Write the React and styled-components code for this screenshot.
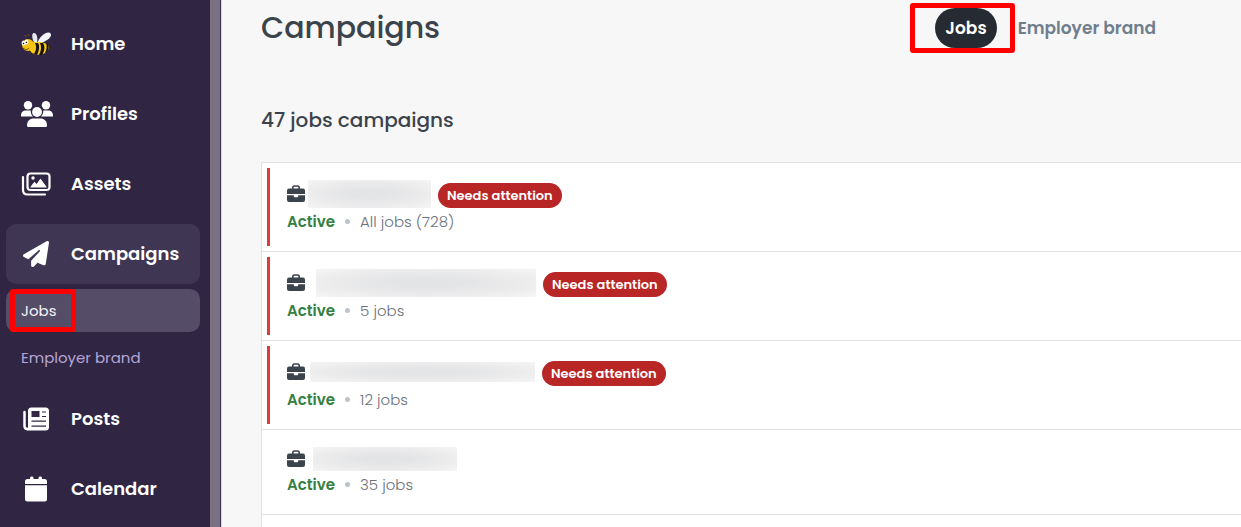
import React from "react";
import styled, {createGlobalStyle} from 'styled-components';
import {FaPaperPlane} from "react-icons/fa6";

const GlobalStyle = createGlobalStyle`
  * {
    box-sizing: border-box;
  }
  body {
    margin: 0;
    background-color: #f7f7f7;
    color: #3b434c;
    font-family: Poppins, Inter, sans-serif;
    overflow: hidden;
  }
  a {
    color: inherit;
    text-decoration: none;
  }
`;

const Layout = styled.div`
  display: flex;
  height: 100vh;
`;

const Sidebar = styled.nav`
  display: flex;
  flex-direction: column;
  flex: none;
  width: 222px;
  padding: 14px 10px 0 6px;
  overflow: hidden;
  background-color: #302643;
  border-right: 1px solid #dcdade;
  box-shadow: inset -1px 0 #3c3350, inset -11px 0 #7a7183;
`;

const NavItem = styled.a`
  display: flex;
  align-items: center;
  flex: none;
  width: 194px;
  height: 60px;
  margin-bottom: ${({$open}) => $open ? '5px' : '10px'};
  padding-left: 15px;
  border-radius: 10px;
  background-color: ${({$open}) => $open ? '#3f3653' : 'transparent'};
  color: #fff;
  font-size: 18px;
  line-height: 26px;
  font-weight: 600;
`;

const NavIcon = styled.span`
  display: flex;
  flex: none;
  justify-content: center;
  width: 30px;
  margin-right: 20px;
  font-size: 26px;
  svg {
    flex: none;
  }
`;

const SubMenu = styled.div`
  display: flex;
  flex-direction: column;
  flex: none;
  gap: 4px;
  margin-bottom: 10px;
`;

const SubItem = styled.a`
  display: flex;
  align-items: center;
  position: relative;
  width: 194px;
  height: 43px;
  padding-left: 15px;
  border-radius: 10px;
  background-color: ${({$active}) => $active ? '#554c68' : 'transparent'};
  && {
    color: ${({$active}) => $active ? '#f4f2f8' : '#b5a5d6'};
  }
  font-size: 15px;
  line-height: 22px;
`;

const Marker = styled.span`
  position: absolute;
  inset: ${({$inset}) => $inset};
  border: 5px solid #fe0000;
  border-radius: 3px;
  pointer-events: none;
`;

const Main = styled.main`
  flex: 1;
  min-width: 0;
  padding-left: 39px;
`;

const Header = styled.header`
  display: flex;
  align-items: center;
  justify-content: space-between;
  height: 56px;
  padding-right: 75px;
`;

const Title = styled.h1`
  margin: 0;
  font-size: 30px;
  font-weight: 500;
`;

const Tabs = styled.div`
  display: flex;
  align-items: center;
`;

const Tab = styled.button`
  position: relative;
  height: 40px;
  padding: 0 10px;
  border: 0;
  border-radius: 20px;
  background-color: ${({$active}) => $active ? '#262b33' : 'transparent'};
  color: ${({$active}) => $active ? '#fff' : '#6f7e8d'};
  font-family: inherit;
  font-size: 17px;
  font-weight: 600;
  cursor: pointer;
  & + & {
    margin-left: 11px;
  }
`;

const Count = styled.h2`
  margin: 48px 0 26px;
  font-size: 20px;
  line-height: 32px;
  font-weight: 500;
`;

const List = styled.ul`
  margin: 0;
  padding: 0;
  list-style: none;
  border: 1px solid #dee2e6;
  border-width: 1px 0 0 1px;
  background-color: #fff;
`;

const Row = styled.li`
  display: flex;
  min-height: 85px;
  padding: 5px;
  border-bottom: 1px solid #dee2e6;
`;

const Body = styled.div`
  padding: 13px 17px;
  border-left: 3px solid ${({$alert}) => $alert ? '#dc3b41' : 'transparent'};
`;

const NameLine = styled.div`
  display: flex;
  align-items: center;
  height: ${({$alert}) => $alert ? 28 : 24}px;
`;

const HiddenName = styled.span`
  width: ${({$width}) => $width}px;
  height: ${({$height}) => $height}px;
  margin-left: ${({$gap}) => $gap}px;
  margin-bottom: 2px;
  background: radial-gradient(ellipse at center, #e3e4e6 20%, #ebebec 60%, #f5f5f5 100%);
`;

const Badge = styled.span`
  margin-left: 7px;
  padding: 0 9px;
  border-radius: 13px;
  background-color: #b92626;
  color: #fff;
  font-size: 13px;
  line-height: 25px;
  font-weight: 600;
  white-space: nowrap;
`;

const StatusLine = styled.div`
  display: flex;
  align-items: center;
  height: 24px;
  color: #6c717b;
  font-size: 15px;
  font-weight: 300;
`;

const Status = styled.span`
  color: #368043;
  font-weight: 600;
`;

const Dot = styled.span`
  width: 5px;
  height: 5px;
  margin: 0 10px;
  border-radius: 50%;
  background-color: #bdc3ca;
`;

const EndMark = styled.div`
  height: 20px;
`;

const BriefcaseSvg = styled.svg`
  flex: none;
  margin-bottom: 3px;
`;

const Bee = () => (
    <svg width="30" height="24" viewBox="0 0 30 24" aria-hidden="true">
        <path d="M14 12C11 8 10 1 13 1c3 0 4 5 3 11z" fill="#e7e8ed"/>
        <path d="M16 12C18 5 25-1 29 1c4 3-4 9-12 11z" fill="#f5f5f8"/>
        <path d="M8 4 7 2M5 5 4 3" stroke="#7c4428" fill="none"/>
        <path d="M9 11c7-2 18-1 19 4-1 7-9 9-15 7-4-1-7-8-4-11z" fill="#f7c81b"/>
        <path d="M14 11c2 4 1 8-1 11l3 1c2-4 3-9 1-12zM19 11c2 4 1 8-1 12h3c3-4 3-9 1-12zM25 11c1 3 1 6-1 10l2-1c2-3 2-6 1-8z" fill="#17140f"/>
        <circle cx="7" cy="13" r="6" fill="#f4c20f"/>
        <ellipse cx="2.5" cy="11" rx="2" ry="2.5" fill="#fff"/>
        <ellipse cx="5.5" cy="10" rx="2" ry="2.5" fill="#fff"/>
        <circle cx="2.5" cy="11.5" r=".8" fill="#111"/>
        <circle cx="5.5" cy="10.5" r=".8" fill="#111"/>
        <path d="M2 16c2 2 4 2 6 0M9 19v3M12 21v2" stroke="#4b3110" strokeWidth=".8" fill="none"/>
    </svg>
);

const People = () => (
    <svg width="34" height="26" viewBox="-2 0 34 26" fill="currentColor" aria-hidden="true">
        <circle cx="7" cy="4.200" r="4.200"/>
        <circle cx="25" cy="4.200" r="4.200"/>
        <path d="M0 15c0-4 2-5.500 5-5.500h4.800C9.500 12 10.500 14 12 15.500H.5Q0 15.500 0 15z"/>
        <path d="M32 15c0-4-2-5.500-5-5.500h-4.800c.3 2.500-.7 4.500-2.200 6h11.500Q32 15.500 32 15z"/>
        <circle cx="16" cy="11" r="4.900"/>
        <path d="M6 24.500C6 20 9 17.500 12.500 17.500h7c3.500 0 6.500 2.500 6.500 7Q26 26 24.500 26h-17Q6 26 6 24.500z"/>
    </svg>
);

const Images = () => (
    <svg width="30" height="24" viewBox="0 0 30 24" fill="none" stroke="currentColor" strokeWidth="2.200" strokeLinecap="round" aria-hidden="true">
        <path d="M2 5v13q0 4.500 4.500 4.500H24"/>
        <rect x="6.500" y="1.500" width="22" height="16.500" rx="3"/>
        <circle cx="12" cy="6" r="1.700" fill="currentColor" stroke="none"/>
        <path d="m10 15 3.500-4.500 2 2.500L19.500 7.500 25 15z" fill="currentColor" strokeWidth="1.200" strokeLinejoin="round"/>
    </svg>
);

const News = () => (
    <svg width="26" height="24" viewBox="0 0 26 24" aria-hidden="true">
        <path d="M1.500 5V19q0 3 3 3" fill="none" stroke="currentColor" strokeWidth="2.500" strokeLinecap="round"/>
        <path fillRule="evenodd" fill="currentColor" d="M8.500.5H22.500q3.500 0 3.500 3.500V20q0 3.500-3.500 3.500H3.500Q5 23 5 20V4q0-3.500 3.500-3.500zM8.500 4v6h8V4zM19 4.500v1h4v-1zM19 9v1h4V9zM8.500 13.500v1.200H23v-1.200zM8.500 18.500v1.200H23v-1.200z"/>
    </svg>
);

const Calendar = () => (
    <svg width="24" height="26" viewBox="0 0 24 26" fill="currentColor" aria-hidden="true">
        <path d="M1 8V5.500q0-2.500 2.500-2.500H6V1.800a1.800 1.800 0 0 1 3.500 0V3h5V1.800a1.800 1.800 0 0 1 3.500 0V3h2.500Q23 3 23 5.500V8z"/>
        <path d="M1 9.300h22V23q0 2.500-2.500 2.500h-17Q1 25.500 1 23z"/>
    </svg>
);

const Briefcase = () => (
    <BriefcaseSvg width="18" height="17" viewBox="0 0 18 17" aria-hidden="true">
        <path d="M5.800 4V2.500q0-1.500 1.500-1.500h3.400q1.500 0 1.500 1.500V4" fill="none" stroke="currentColor" strokeWidth="1.600"/>
        <path d="M2 3.500h14q2 0 2 2V9H0V5.500q0-2 2-2z" fill="currentColor"/>
        <path d="M0 10.200h6.800v1q0 1 1 1h2.400q1 0 1-1v-1H18V15q0 2-2 2H2q-2 0-2-2z" fill="currentColor"/>
    </BriefcaseSvg>
);

const campaigns = [
    {jobs: 'All jobs (728)', alert: true, gap: 3, width: 123, height: 28},
    {jobs: '5 jobs', alert: true, gap: 11, width: 220, height: 28},
    {jobs: '12 jobs', alert: true, gap: 5, width: 225, height: 20},
    {jobs: '35 jobs', alert: false, gap: 8, width: 144, height: 24},
];

const Campaign = ({jobs, alert, gap, width, height}) => (
    <Row>
        <Body $alert={alert}>
            <NameLine $alert={alert}>
                <Briefcase/>
                <HiddenName $gap={gap} $width={width} $height={height}/>
                {alert && <Badge>Needs attention</Badge>}
            </NameLine>
            <StatusLine>
                <Status>Active</Status>
                <Dot/>
                {jobs}
            </StatusLine>
        </Body>
    </Row>
);

const App = () => (
    <Layout>
        <GlobalStyle/>
        <Sidebar>
            <NavItem href="#home"><NavIcon><Bee/></NavIcon>Home</NavItem>
            <NavItem href="#profiles"><NavIcon><People/></NavIcon>Profiles</NavItem>
            <NavItem href="#assets"><NavIcon><Images/></NavIcon>Assets</NavItem>
            <NavItem href="#campaigns" $open><NavIcon><FaPaperPlane/></NavIcon>Campaigns</NavItem>
            <SubMenu>
                <SubItem href="#jobs" $active>Jobs<Marker $inset="0 124px 0 4px"/></SubItem>
                <SubItem href="#employer-brand">Employer brand</SubItem>
            </SubMenu>
            <NavItem href="#posts"><NavIcon><News/></NavIcon>Posts</NavItem>
            <NavItem href="#calendar"><NavIcon><Calendar/></NavIcon>Calendar</NavItem>
        </Sidebar>
        <Main>
            <Header>
                <Title>Campaigns</Title>
                <Tabs>
                    <Tab type="button" $active>Jobs<Marker $inset="-5px -18px -5px -25px"/></Tab>
                    <Tab type="button">Employer brand</Tab>
                </Tabs>
            </Header>
            <Count>47 jobs campaigns</Count>
            <List>
                {campaigns.map((campaign) => <Campaign key={campaign.jobs} {...campaign}/>)}
                <EndMark/>
            </List>
        </Main>
    </Layout>
);

export default App;
